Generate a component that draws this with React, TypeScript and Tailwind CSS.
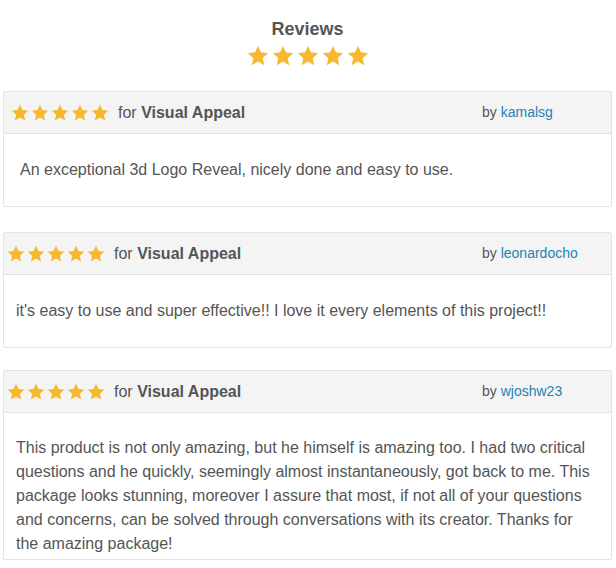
import React from "react";

function Star({ size }: { size: number }) {
  return (
    <svg width={size} height={size} viewBox="0 0 24 24" className="block shrink-0">
      <polygon
        points="12,1 15.2,8 23,8.9 17.2,14.2 18.8,22 12,18.1 5.2,22 6.8,14.2 1,8.9 8.8,8"
        fill="#f5b82e"
      />
    </svg>
  );
}

type Review = {
  user: string;
  text: string;
  headPad: string;
  bodyPad: string;
};

const reviews: Review[] = [
  {
    user: "kamalsg",
    text: "An exceptional 3d Logo Reveal, nicely done and easy to use.",
    headPad: "pl-[7px]",
    bodyPad: "pl-[16px] pr-[12px] pt-[24px] pb-[24px]",
  },
  {
    user: "leonardocho",
    text: "it's easy to use and super effective!! I love it every elements of this project!!",
    headPad: "pl-[3px]",
    bodyPad: "pl-[12px] pr-[12px] pt-[24px] pb-[24px]",
  },
  {
    user: "wjoshw23",
    text: "This product is not only amazing, but he himself is amazing too. I had two critical questions and he quickly, seemingly almost instantaneously, got back to me. This package looks stunning, moreover I assure that most, if not all of your questions and concerns, can be solved through conversations with its creator. Thanks for the amazing package!",
    headPad: "pl-[3px]",
    bodyPad: "pl-[12px] pr-[12px] pt-[23px] pb-[3px]",
  },
];

function Card({ r, className }: { r: Review; className: string }) {
  return (
    <div className={`border border-[#e0e4e9] rounded-[2px] bg-white ${className}`}>
      <div className={`h-[42px] flex items-center bg-[#f4f4f4] border-b border-[#e0e4e9] ${r.headPad}`}>
        <div className="flex-1 flex items-center">
          <div className="flex items-center gap-[2px]">
            <Star size={18} />
            <Star size={18} />
            <Star size={18} />
            <Star size={18} />
            <Star size={18} />
          </div>
          <span className="ml-[9px] text-[16px] text-[#555]">
            for <span className="font-bold">Visual Appeal</span>
          </span>
        </div>
        <div className="w-[129px] shrink-0 text-[14px] text-[#555]">
          by <span className="text-[#2482b5]">{r.user}</span>
        </div>
      </div>
      <div className={`text-[16px] leading-[24px] text-[#555] ${r.bodyPad}`}>{r.text}</div>
    </div>
  );
}

export default function App() {
  return (
    <div
      className="w-[616px] h-[568px] bg-white overflow-hidden pl-[3px] pr-[4px]"
      style={{ fontFamily: '"Liberation Sans", Arial, sans-serif' }}
    >
      <div className="pt-[17px] text-center text-[18px] leading-[24px] font-bold text-[#555]">Reviews</div>
      <div className="mt-[4px] flex justify-center gap-[3px]">
        <Star size={22} />
        <Star size={22} />
        <Star size={22} />
        <Star size={22} />
        <Star size={22} />
      </div>
      <Card r={reviews[0]} className="mt-[24px]" />
      <Card r={reviews[1]} className="mt-[25px]" />
      <Card r={reviews[2]} className="mt-[22px]" />
    </div>
  );
}
